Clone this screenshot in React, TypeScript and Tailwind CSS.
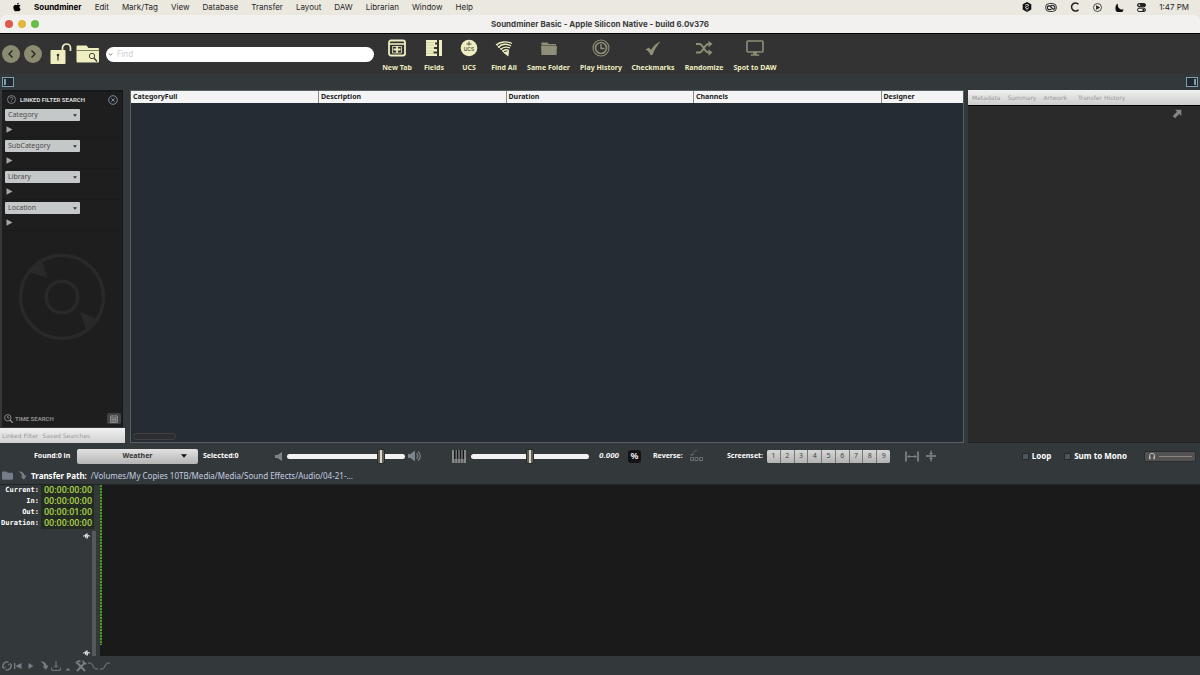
import { useState, type ReactNode } from 'react';
import { FaApple, FaFolder } from 'react-icons/fa';

const menus = ['Edit', 'Mark/Tag', 'View', 'Database', 'Transfer', 'Layout', 'DAW', 'Librarian', 'Window', 'Help'];
const columns = ['CategoryFull', 'Description', 'Duration', 'Channels', 'Designer'];
const filters = ['Category', 'SubCategory', 'Library', 'Location'];
const screensets = [1, 2, 3, 4, 5, 6, 7, 8, 9];
const times = [
  { label: 'Current:', value: '00:00:00:00' },
  { label: 'In:', value: '00:00:00:00' },
  { label: 'Out:', value: '00:00:01:00' },
  { label: 'Duration:', value: '00:00:00:00' },
];

function NewTabIcon() {
  return (
    <svg width="18" height="18" viewBox="0 0 18 18" fill="none" stroke="#eeeec0">
      <rect x="1" y="1.5" width="16" height="15" rx="2" strokeWidth="1.8" />
      <path d="M1 5h16" strokeWidth="1.6" />
      <path d="M4.5 7.5h9v6.5h-9z" strokeWidth="0.8" />
      <path d="M9 7v7M5.5 10.5h7" strokeWidth="1.8" />
    </svg>
  );
}

function FieldsIcon() {
  return (
    <svg width="18" height="18" viewBox="0 0 18 18" fill="#eeeec0">
      <path d="M1 1h11v2.500h-2v2h2v2.500h-3v2h3v2.500h-3.500v2h3.500v2.500H1z" />
      <path d="M1 3.500h8M1 6h8M1 9h8M1 12h7M1 14.500h8" stroke="#b4b490" strokeWidth="0.5" />
      <rect x="14" y="1" width="3" height="16" />
    </svg>
  );
}

function UcsIcon() {
  return (
    <svg width="18" height="18" viewBox="0 0 18 18">
      <circle cx="9" cy="9" r="8.300" fill="#eeeec0" />
      <path d="M9 2.500v4M6.500 5h5" stroke="#55554a" strokeWidth="1" />
      <text x="9" y="11.500" textAnchor="middle" fontSize="5" fontFamily="Inter, sans-serif" fontWeight="600" fill="#55554a">UCS</text>
    </svg>
  );
}

function FindAllIcon() {
  return (
    <svg width="18" height="18" viewBox="0 0 18 18" fill="none" stroke="#eeeec0" strokeWidth="1.300">
      <path d="M1 6C5 2.500 12 2 17 4.500" />
      <path d="M3 8.500C6.500 5 11.500 4.500 16 6.800" />
      <path d="M5.500 10.500C8 8 11.500 7.500 15 9" />
      <path d="M7.500 12.500C9.500 10.500 11.500 10.200 14 11.500" />
      <path d="M9.500 13.700l3.800-1-.4 3.500z" fill="#eeeec0" />
      <path d="M1.500 5.500l10.500 10.500" strokeWidth="0.8" />
    </svg>
  );
}

function SameFolderIcon() {
  return (
    <svg width="18" height="18" viewBox="0 0 18 18" fill="#8f8f78">
      <path d="M1.500 3.500h6l1.500 1.500h7v1.500h-14.500z" />
      <path d="M1 7h16l-.5 9h-15z" />
    </svg>
  );
}

function HistoryIcon() {
  return (
    <svg width="18" height="18" viewBox="0 0 18 18" fill="none" stroke="#8f8f78">
      <circle cx="9" cy="9" r="8" strokeWidth="1.100" />
      <circle cx="9" cy="9" r="5.500" strokeWidth="1.700" />
      <path d="M9 5v4.500h3.500" strokeWidth="1.400" />
    </svg>
  );
}

function CheckIcon() {
  return (
    <svg width="18" height="18" viewBox="0 0 18 18" fill="#8f8f78">
      <path d="M1.500 10.500l3.500-2 2 2.500C9 7.500 12 4 16.500 2.500 13 6.500 10 11.500 8.500 16H6.500C5.500 13.500 4 11.500 1.500 10.500z" />
    </svg>
  );
}

function ShuffleIcon() {
  return (
    <svg width="18" height="18" viewBox="0 0 18 18" fill="none" stroke="#8f8f78" strokeWidth="1.900">
      <path d="M1 5h3.500c3.500 0 5 8.500 9 8.500h1" />
      <path d="M1 13.500h3.500c3.500 0 5-8.500 9-8.500h1" />
      <path d="M13.500 1.800L17.500 5l-4 3.200zM13.500 10.300l4 3.200-4 3.200z" fill="#8f8f78" stroke="none" />
    </svg>
  );
}

function MonitorIcon() {
  return (
    <svg width="18" height="18" viewBox="0 0 18 18" fill="none" stroke="#8f8f78">
      <rect x="1" y="2" width="16" height="11" rx="1" strokeWidth="1.600" />
      <path d="M7.500 13h3v2.500h2.500v1H5v-1h2.500z" fill="#8f8f78" strokeWidth="0.5" />
    </svg>
  );
}

// widths are per item since the labels vary a lot
const tools: { label: string; width: string; icon: ReactNode }[] = [
  { label: 'New Tab', width: 'w-[38px]', icon: <NewTabIcon /> },
  { label: 'Fields', width: 'w-9', icon: <FieldsIcon /> },
  { label: 'UCS', width: 'w-[34px]', icon: <UcsIcon /> },
  { label: 'Find All', width: 'w-9', icon: <FindAllIcon /> },
  { label: 'Same Folder', width: 'w-[53px]', icon: <SameFolderIcon /> },
  { label: 'Play History', width: 'w-[52px]', icon: <HistoryIcon /> },
  { label: 'Checkmarks', width: 'w-[52px]', icon: <CheckIcon /> },
  { label: 'Randomize', width: 'w-[50px]', icon: <ShuffleIcon /> },
  { label: 'Spot to DAW', width: 'w-[52px]', icon: <MonitorIcon /> },
];

function MenuBar() {
  return (
    <nav className="flex h-[15px] items-center bg-[#ebe8e0] pr-[11px] pb-px pl-3 font-['Inter',sans-serif] text-[8px] leading-3 text-[#262626]">
      <FaApple className="mr-3 size-[10px] text-black" />
      <button className="mr-[13px] font-bold text-black">Soundminer</button>
      <div className="flex gap-[13px]">
        {menus.map((m) => (
          <button key={m}>{m}</button>
        ))}
      </div>
      <div className="ml-auto flex items-center gap-[13px]">
        <svg width="10" height="10" viewBox="0 0 10 10">
          <path d="M5 0l4.300 2.200v5.200L5 10 .7 7.400V2.200z" fill="#111" />
          <path d="M3 3.300l2-1 2 1-4 2.200 2 1.200 2-1M5 7v1.500" fill="none" stroke="#ebe8e0" strokeWidth="0.8" />
        </svg>
        <svg width="12" height="9" viewBox="0 0 12 9" fill="none" stroke="#222">
          <rect x="0.500" y="0.500" width="11" height="8" rx="4" strokeWidth="0.900" />
          <path d="M6.500 6C5 7.200 2.300 6.800 2.300 4.700 2.300 2.800 4.500 2.300 5.500 3.500l2.200 2.300c1 .9 2.200.1 2.200-1C9.900 2.500 7 1.500 5.700 3" strokeWidth="1.200" />
        </svg>
        <svg width="10" height="10" viewBox="0 0 10 10" fill="none" stroke="#222" strokeWidth="1.500">
          <path d="M8.500 2.300A4 4 0 1 0 8.500 7.700" />
        </svg>
        <svg width="9" height="9" viewBox="0 0 9 9" fill="none" stroke="#222" strokeWidth="0.800">
          <circle cx="4.500" cy="4.500" r="4" />
          <path d="M3.500 2.800l3 1.700-3 1.700z" fill="#222" />
        </svg>
        <svg width="9" height="9" viewBox="0 0 9 9" fill="#111">
          <path d="M3 .5C1 1.500.3 3.300.5 5a4 4 0 0 0 8 1.200C5.500 7.200 2 5 3 .5z" />
        </svg>
        <svg width="9" height="9" viewBox="0 0 9 9" fill="none" stroke="#222" strokeWidth="1">
          <rect x="0.500" y="0.500" width="8" height="3.300" rx="1.600" fill="#222" />
          <rect x="0.500" y="5.200" width="8" height="3.300" rx="1.600" />
          <circle cx="2.300" cy="2.100" r="0.900" fill="#ebe8e0" stroke="none" />
          <circle cx="6.500" cy="6.900" r="1.200" fill="#222" stroke="none" />
        </svg>
        <span>1:47 PM</span>
      </div>
    </nav>
  );
}

function TitleBar() {
  return (
    <header className="grid h-[19px] grid-cols-[1fr_auto_1fr] items-center rounded-t-md border-b border-black bg-[#f2f1ef] px-[5px]">
      <div className="flex gap-[5px]">
        <button aria-label="Close" className="size-2 rounded-full bg-[#e2584f]" />
        <button aria-label="Minimize" className="size-2 rounded-full bg-[#e3b73c]" />
        <button aria-label="Zoom" className="size-2 rounded-full bg-[#68bd4b]" />
      </div>
      <h1 className="font-['Inter',sans-serif] text-[8px] leading-3 font-bold text-[#3c3c3c]">
        Soundminer Basic - Apple Silicon Native - build 6.0v376
      </h1>
    </header>
  );
}

function Toolbar() {
  return (
    <div className="flex h-10 items-center bg-[#333333] pl-0.5">
      <div className="flex gap-1">
        <button aria-label="Back" className="flex size-[18px] items-center justify-center rounded-full bg-[#8b8b71]">
          <svg width="8" height="8" viewBox="0 0 8 8" fill="none" stroke="#26261f" strokeWidth="1.400">
            <path d="M5.500 .5L2 4l3.500 3.500" />
          </svg>
        </button>
        <button aria-label="Forward" className="flex size-[18px] items-center justify-center rounded-full bg-[#8b8b71]">
          <svg width="8" height="8" viewBox="0 0 8 8" fill="none" stroke="#26261f" strokeWidth="1.400">
            <path d="M2.500 .5L6 4 2.500 7.500" />
          </svg>
        </button>
      </div>
      <button aria-label="Unlock" className="ml-2">
        <svg width="22" height="22" viewBox="0 0 22 22">
          <path d="M12.500 7V5a4 4 0 0 1 8 0v3" fill="none" stroke="#eeeec0" strokeWidth="1.700" />
          <rect x="0.500" y="7" width="15" height="14" rx="0.800" fill="#eeeec0" />
          <circle cx="8" cy="12" r="1.300" fill="#333" />
          <path d="M8 12.500v5" stroke="#333" strokeWidth="1.200" />
        </svg>
      </button>
      <button aria-label="Search folder" className="ml-1">
        <svg width="24" height="18" viewBox="0 0 24 18">
          <path d="M.5 1.500Q.5.500 1.500.500h9l2 2.500h9.500q1 0 1 1v12.500q0 1-1 1H1.500q-1 0-1-1z" fill="#eeeec0" />
          <path d="M.5 5.500h23" stroke="#4a4a3c" strokeWidth="0.700" />
          <circle cx="16" cy="11" r="2.700" fill="none" stroke="#333" strokeWidth="0.900" />
          <path d="M18 13l3 3.500" stroke="#333" strokeWidth="1.200" />
        </svg>
      </button>
      <label className="ml-1.5 flex h-[15px] w-[268px] items-center gap-1 rounded-full bg-white px-0.5">
        <svg width="5" height="5" viewBox="0 0 5 5" fill="none" stroke="#555" strokeWidth="0.800">
          <path d="M.8 1.500l1.700 1.700 1.700-1.700" />
        </svg>
        <input
          aria-label="Find"
          placeholder="Find"
          className="min-w-0 flex-1 text-[8px] leading-3 text-[#333] outline-none placeholder:text-[#cfcfcf]"
        />
      </label>
      <div className="ml-1 flex self-end pb-px">
        {tools.map((t) => (
          <button
            key={t.label}
            className={`flex flex-col items-center gap-1.5 text-[7px] leading-[10px] font-bold whitespace-nowrap text-[#eeeec0] ${t.width}`}
          >
            {t.icon}
            {t.label}
          </button>
        ))}
      </div>
    </div>
  );
}

function PanelToggles() {
  return (
    <div className="flex h-4 items-center justify-between bg-[#33393b] pr-0.5 pl-0.5">
      <button aria-label="Toggle left panel" className="flex h-[10px] w-3 border border-[#7fa0b2] bg-[#20282d] p-px">
        <span className="h-full w-0.5 bg-[#7fa0b2]" />
      </button>
      <button aria-label="Toggle right panel" className="flex h-[10px] w-3 justify-end border border-[#7fa0b2] bg-[#20282d] p-px">
        <span className="h-full w-0.5 bg-[#7fa0b2]" />
      </button>
    </div>
  );
}

function FilterPanel() {
  return (
    <aside className="flex w-[125px] shrink-0 flex-col">
      <div className="mr-0.5 ml-0.5 flex flex-1 flex-col border-t-2 border-r border-[#151718] bg-[#1e1e1e]">
        <div className="flex h-[15px] items-center gap-1 pr-1 pl-[5px]">
          <svg width="9" height="9" viewBox="0 0 9 9" fill="none" stroke="#98a4aa" strokeWidth="0.700">
            <circle cx="4.500" cy="4.500" r="4" />
            <path d="M3.200 3.500c0-1.800 2.600-1.800 2.600 0 0 1-1.300.9-1.300 2M4.500 6.300v.8" />
          </svg>
          <h2 className="font-['Liberation_Sans_Narrow','Roboto',sans-serif] text-[6px] leading-3 font-bold whitespace-nowrap text-[#d5d8da]">
            LINKED FILTER SEARCH
          </h2>
          <button aria-label="Clear filters" className="ml-auto">
            <svg width="10" height="10" viewBox="0 0 10 10" fill="none" stroke="#7f9aa8" strokeWidth="0.900">
              <circle cx="5" cy="5" r="4.300" />
              <path d="M3.300 3.300l3.400 3.400M6.700 3.300L3.300 6.700" />
            </svg>
          </button>
        </div>
        {filters.map((f) => (
          <div key={f} className="h-[31px] border-b border-[#1a1a1a] pt-0.5 pl-[3px]">
            <div className="grid w-[75px] items-center">
              <select
                aria-label={f}
                className="col-start-1 row-start-1 h-3 appearance-none rounded-[1px] bg-[#c5c8c9] pl-[3px] text-[7px] leading-[10px] text-[#4c4c4c]"
              >
                <option>{f}</option>
              </select>
              <svg className="pointer-events-none col-start-1 row-start-1 mr-[3px] justify-self-end" width="4" height="3" viewBox="0 0 4 3" fill="#333">
                <path d="M0 .3h4L2 2.800z" />
              </svg>
            </div>
            <button aria-label={`Expand ${f}`} className="mt-[5px] ml-px block">
              <svg width="7" height="7" viewBox="0 0 7 7" fill="#a5a5a5">
                <path d="M.5 .3L6.500 3.500.5 6.700z" />
              </svg>
            </button>
          </div>
        ))}
        <div className="flex flex-1 justify-center pt-[22px]">
          <svg width="88" height="88" viewBox="0 0 88 88" fill="none" stroke="#292929" strokeWidth="3.500">
            <circle cx="44" cy="44" r="41.500" />
            <circle cx="44" cy="44" r="15.800" />
            <path d="M11 19L24 8l6 17zM62 59l17 7-11 10z" fill="#292929" stroke="none" />
          </svg>
        </div>
        <div className="flex h-[17px] items-center gap-0.5 pr-px pl-0.5">
          <svg width="9" height="9" viewBox="0 0 9 9" fill="none" stroke="#a0a0a0" strokeWidth="0.800">
            <circle cx="3.800" cy="3.800" r="3.200" />
            <path d="M3.800 2v2h1.500" />
            <path d="M6.200 6.200l2.500 2.500" strokeWidth="1.200" />
          </svg>
          <h2 className="font-['Liberation_Sans_Narrow','Roboto',sans-serif] text-[6px] leading-3 font-bold text-[#8c8c8c]">TIME SEARCH</h2>
          <button aria-label="Pick a date" className="ml-auto flex h-[11px] w-[14px] items-center justify-center rounded-[2px] bg-[#434343]">
            <svg width="8" height="8" viewBox="0 0 8 8" fill="none" stroke="#a0a0a0" strokeWidth="0.700">
              <rect x="0.500" y="1" width="7" height="6.500" />
              <path d="M.5 2.800h7M.5 4.300h7M.5 6h7M3 2.800v4.700M5.200 2.800v4.700M2.300 0v1.500M5.700 0v1.500" />
            </svg>
          </button>
        </div>
      </div>
      <div className="mt-px flex h-[15px] items-center gap-1 bg-gradient-to-b from-[#f0f0f0] to-[#d2d2d2] pl-0.5 font-['DejaVu_Sans',sans-serif] text-[6px] leading-3 whitespace-nowrap text-[#9a9a9a]">
        <button>Linked Filter</button>
        <button>Saved Searches</button>
      </div>
    </aside>
  );
}

function ResultsTable() {
  return (
    <section className="ml-[5px] flex min-w-0 flex-1 flex-col overflow-hidden border border-[#586064] bg-[#252c33]">
      <table className="w-[938px] table-fixed bg-[#f4f4f4] text-left text-[7px] leading-3 text-[#1c1c1c]">
        <thead>
          <tr>
            {columns.map((c) => (
              <th key={c} className="h-3 border-r border-[#8a8a8a] p-0 pl-0.5 font-bold">
                {c}
              </th>
            ))}
          </tr>
        </thead>
      </table>
      <div className="mt-auto mb-0.5 ml-0.5 h-[7px] w-[43px] rounded-full border border-[#3f4143] bg-[#2b2d30]" />
    </section>
  );
}

function MetadataPanel() {
  return (
    <aside className="ml-1 flex w-[232px] shrink-0 flex-col border-b border-[#1f2223] bg-[#2a2a2a]">
      <div className="flex h-4 items-center gap-[7px] border-b border-black bg-gradient-to-b from-[#f2f2f2] to-[#cdcdcd] pl-1 font-['DejaVu_Sans',sans-serif] text-[6px] leading-3 whitespace-nowrap text-[#999]">
        <button>Metadata</button>
        <button>Summary</button>
        <button>Artwork</button>
        <button className="ml-1">Transfer History</button>
      </div>
      <button aria-label="Pop out" className="mt-[3px] mr-[18px] self-end">
        <svg width="10" height="10" viewBox="0 0 10 10" fill="#858585">
          <path d="M3 .8h6.300V7L7.200 5 3 9.300 .8 7 5 2.800z" />
        </svg>
      </button>
    </aside>
  );
}

const slider =
  'h-[15px] w-[118px] appearance-none bg-transparent [&::-webkit-slider-runnable-track]:h-[5px] [&::-webkit-slider-runnable-track]:rounded-full [&::-webkit-slider-runnable-track]:bg-[#f2f2f2] [&::-webkit-slider-thumb]:-mt-[5px] [&::-webkit-slider-thumb]:h-[15px] [&::-webkit-slider-thumb]:w-2 [&::-webkit-slider-thumb]:appearance-none [&::-webkit-slider-thumb]:rounded-[2px] [&::-webkit-slider-thumb]:border [&::-webkit-slider-thumb]:border-[#2c2c28] [&::-webkit-slider-thumb]:bg-linear-[90deg,#5d5d55_35%,#d8d8ce_35%,#d8d8ce_65%,#5d5d55_65%]';

function ControlBar() {
  const [volume, setVolume] = useState(82);
  const [pitch, setPitch] = useState(50);

  return (
    <div className="flex h-[26px] items-center text-[7px] leading-3 font-bold whitespace-nowrap text-white">
      <div className="flex w-[275px] items-center pl-[34px]">
        <label htmlFor="database" className="w-[43px]">Found:0 in</label>
        <div className="mr-[5px] grid w-[121px] items-center">
          <select
            id="database"
            className="col-start-1 row-start-1 h-[15px] appearance-none rounded-[2px] bg-gradient-to-b from-[#e2e2e2] to-[#b5b5b5] text-[7px] leading-3 font-bold text-[#333] [text-align-last:center]"
          >
            <option>Weather</option>
          </select>
          <svg className="pointer-events-none col-start-1 row-start-1 mr-[11px] justify-self-end" width="6" height="4" viewBox="0 0 6 4" fill="#111">
            <path d="M0 .3h6L3 3.800z" />
          </svg>
        </div>
        <span>Selected:0</span>
      </div>

      <div className="flex w-[177px] items-center">
        <svg className="mr-1" width="8" height="9" viewBox="0 0 8 9" fill="#7c858c">
          <path d="M0 3h2.500L7 0v9L2.500 6H0z" />
        </svg>
        <input type="range" aria-label="Volume" className={slider} value={volume} onChange={(e) => setVolume(+e.target.value)} />
        <svg className="ml-[3px]" width="14" height="12" viewBox="0 0 14 12" fill="#7c858c">
          <path d="M0 4h2.500L7 .5v11L2.500 8H0z" />
          <path d="M8.500 3.500c1.500 1.500 1.500 3.500 0 5M10 1.500c3 2.500 3 6.500 0 9" fill="none" stroke="#7c858c" strokeWidth="1.200" />
        </svg>
      </div>

      <div className="flex w-[147px] items-center gap-[5px]">
        <svg width="14" height="13" viewBox="0 0 14 13">
          <rect width="14" height="13" fill="#87898a" />
          <path d="M2.800 0v9M5.600 0v9M8.500 0v9M11.300 0v9" stroke="#151515" strokeWidth="1.500" />
          <path d="M2.800 8v5M5.600 8v5M8.500 8v5M11.300 8v5" stroke="#2b2b2b" strokeWidth="0.600" />
        </svg>
        <input type="range" aria-label="Pitch" className={slider} value={pitch} onChange={(e) => setPitch(+e.target.value)} />
      </div>

      <div className="flex w-[54px] items-center">
        <output className="w-[29px] font-['Roboto',sans-serif] text-[8px] italic">0.000</output>
        <button className="flex size-[13px] items-center justify-center rounded-[3px] bg-[#131313] text-[9px] font-semibold">%</button>
      </div>

      <div className="flex w-[74px] items-center">
        <span className="w-[37px]">Reverse:</span>
        <button aria-label="Reverse">
          <svg width="13" height="12" viewBox="0 0 13 12" fill="none" stroke="#6f7476" strokeWidth="0.900">
            <path d="M.5 7.500h3v3h-3zM5 7.500h3v3H5zM9.500 7.500h3v3h-3z" />
            <path d="M2 5.500C2 2.500 4 1 7 .5M.5 4L2 5.800 3.500 4" strokeDasharray="2 0.700" />
          </svg>
        </button>
      </div>

      <div className="flex items-center">
        <span className="w-10">Screenset:</span>
        <div className="flex w-[123px] gap-px overflow-hidden rounded-[2px] bg-[#777]">
          {screensets.map((n) => (
            <button key={n} className="h-[13px] flex-1 bg-gradient-to-b from-[#d6d6d6] to-[#b3b3b3] font-normal text-[#444]">
              {n}
            </button>
          ))}
        </div>
        <button aria-label="Fit horizontally" className="ml-[15px]">
          <svg width="14" height="11" viewBox="0 0 14 11" fill="none" stroke="#878b8c">
            <path d="M1 .5v10M13 .5v10" strokeWidth="1.600" />
            <path d="M3 5.500h8M4.500 4L3 5.500 4.500 7M9.500 4L11 5.500 9.500 7" strokeWidth="0.900" />
          </svg>
        </button>
        <button aria-label="Fit vertically" className="ml-1.5">
          <svg width="12" height="12" viewBox="0 0 12 12" fill="none" stroke="#a0a3a4">
            <path d="M1 6h10" strokeWidth="1.200" />
            <path d="M6 .5v4M6 7.500v4M4.500 3L6 4.500 7.500 3M4.500 9L6 7.500 7.500 9" strokeWidth="0.900" />
          </svg>
        </button>
      </div>

      <div className="ml-auto flex items-center pr-1 text-[8px]">
        <label className="mr-[13px] flex items-center gap-[3px]">
          <input type="checkbox" className="size-[7px] appearance-none border border-[#25292b] bg-[#50545c] checked:bg-[#a8c850]" />
          Loop
        </label>
        <label className="mr-[17px] flex items-center gap-[3px]">
          <input type="checkbox" className="size-[7px] appearance-none border border-[#25292b] bg-[#50545c] checked:bg-[#a8c850]" />
          Sum to Mono
        </label>
        <button aria-label="Headphone level" className="flex h-[11px] w-[52px] items-center gap-[3px] rounded-[2px] border border-[#2a2a2a] bg-[#525252] px-[3px]">
          <svg width="8" height="8" viewBox="0 0 8 8" fill="none" stroke="#c5c5c5">
            <path d="M1.500 6V4a2.500 2.700 0 0 1 5 0v2" strokeWidth="0.900" />
            <path d="M1.800 4.500v2.800M6.200 4.500v2.800" strokeWidth="1.400" />
          </svg>
          <span className="h-px flex-1 bg-[#8a8480]" />
        </button>
      </div>
    </div>
  );
}

function Waveform() {
  return (
    <section className="flex h-[172px] border-t border-[#202425]">
      <div className="flex w-24 shrink-0 flex-col">
        <table className="w-[94px] table-fixed">
          <tbody>
            {times.map((t) => (
              <tr key={t.label}>
                <th className="h-[11px] w-[41px] p-0 pr-0.5 text-right font-['DejaVu_Sans_Mono',monospace] text-[7px] leading-[11px] font-bold text-white">
                  {t.label}
                </th>
                <td className="bg-[#232b22] p-0 pl-[3px] font-['Roboto',sans-serif] text-[9px] leading-[11px] font-medium text-[#a9cf4c]">
                  {t.value}
                </td>
              </tr>
            ))}
          </tbody>
        </table>
        <div className="mt-0.5 flex flex-1 justify-end gap-0.5">
          <div className="flex flex-col justify-between pt-0.5">
            {['Zoom in', 'Zoom out'].map((label) => (
              <button key={label} aria-label={label}>
                <svg width="7" height="6" viewBox="0 0 7 6" fill="none" stroke="#eee" strokeWidth="0.900">
                  <path d="M0 3h1.500L2.500 1.500v3L4 .5v5L5 2l.5 1H7" />
                </svg>
              </button>
            ))}
          </div>
          <div className="w-1 bg-[#55595b]" />
        </div>
      </div>
      <div className="ml-1 flex-1 bg-[#1a1a1a]">
        <div className="h-[160px] w-0.5 bg-[repeating-linear-gradient(#4b9a22_0_2px,#23481a_2px_3px)]" />
      </div>
    </section>
  );
}

function BottomBar() {
  return (
    <footer className="flex h-[19px] items-center gap-0.5 pl-0.5 text-[#787e86]">
      <button aria-label="Cycle">
        <svg width="10" height="10" viewBox="0 0 10 10" fill="none" stroke="currentColor" strokeWidth="1.300">
          <path d="M1.300 6.500A4 4 0 0 1 6.500 1.300M8.700 3.500A4 4 0 0 1 3.500 8.700" />
          <path d="M0 5l1.500 2.500L3.800 6M10 5L8.500 2.500 6.200 4" strokeWidth="1" />
        </svg>
      </button>
      <button aria-label="Return to start">
        <svg width="8" height="8" viewBox="0 0 8 8" fill="currentColor">
          <path d="M0 1h1.300v6H0zM7.500 1v6L1.500 4z" />
        </svg>
      </button>
      <button aria-label="Play" className="ml-1">
        <svg width="6" height="8" viewBox="0 0 6 8" fill="currentColor">
          <path d="M.5 1L5.500 4l-5 3z" />
        </svg>
      </button>
      <button aria-label="Transfer" className="ml-1">
        <TransferArrow />
      </button>
      <button aria-label="Download">
        <svg width="10" height="10" viewBox="0 0 10 10" fill="none" stroke="currentColor" strokeWidth="1">
          <path d="M5 0v6M3 4.500l2 2 2-2M.7 6.500v2.800h8.600V6.500" />
        </svg>
      </button>
      <button aria-label="More" className="mx-0.5 self-end pb-1">
        <svg width="6" height="4" viewBox="0 0 6 4" fill="currentColor">
          <path d="M.5 3.500L3 1l2.500 2.500z" />
        </svg>
      </button>
      <button aria-label="Tools">
        <svg width="12" height="12" viewBox="0 0 12 12" fill="none" stroke="currentColor">
          <path d="M2.500 3l7.500 8M10 2.500L2 11" strokeWidth="2" />
          <path d="M1 3.500C2 1 4 .8 5.500 1.500M8.500 .5c-1 2 .5 3.500 3 3" strokeWidth="1.600" />
        </svg>
      </button>
      <div className="-ml-0.5 flex">
        <button aria-label="Fade out">
          <svg width="12" height="8" viewBox="0 0 12 8" fill="none" stroke="currentColor" strokeWidth="1">
            <path d="M1 1h2c3 0 3 6 6 6h2" />
          </svg>
        </button>
        <button aria-label="Fade in">
          <svg width="12" height="8" viewBox="0 0 12 8" fill="none" stroke="currentColor" strokeWidth="1">
            <path d="M1 7h2c3 0 3-6 6-6h2" />
          </svg>
        </button>
      </div>
    </footer>
  );
}

function TransferArrow() {
  return (
    <svg width="9" height="9" viewBox="0 0 9 9" fill="currentColor">
      <path d="M0 .5c3.500-.5 6 1 6.500 4H8.500L6 8.800 2.500 5.500h1.700C4 3 2.500 1.500 0 .5z" />
    </svg>
  );
}

export default function App() {
  return (
    <div className="flex min-h-screen flex-col bg-[#e8e5dd] font-['Noto_Sans','Open_Sans',sans-serif]">
      <MenuBar />
      <TitleBar />
      <div className="flex flex-1 flex-col bg-[#33393b]">
        <Toolbar />
        <PanelToggles />
        <main className="flex flex-1">
          <FilterPanel />
          <ResultsTable />
          <MetadataPanel />
        </main>
        <ControlBar />
        <div className="flex h-[15px] items-center pb-0.5 pl-0.5 text-[8px] leading-3 whitespace-nowrap text-[#747d88]">
          <FaFolder className="mr-[5px] size-[11px]" />
          <TransferArrow />
          <p className="ml-1 text-[#c3cbe0]">
            <b className="mr-1 text-white">Transfer Path:</b>
            /Volumes/My Copies 10TB/Media/Media/Sound Effects/Audio/04-21-...
          </p>
        </div>
        <Waveform />
        <BottomBar />
      </div>
    </div>
  );
}
